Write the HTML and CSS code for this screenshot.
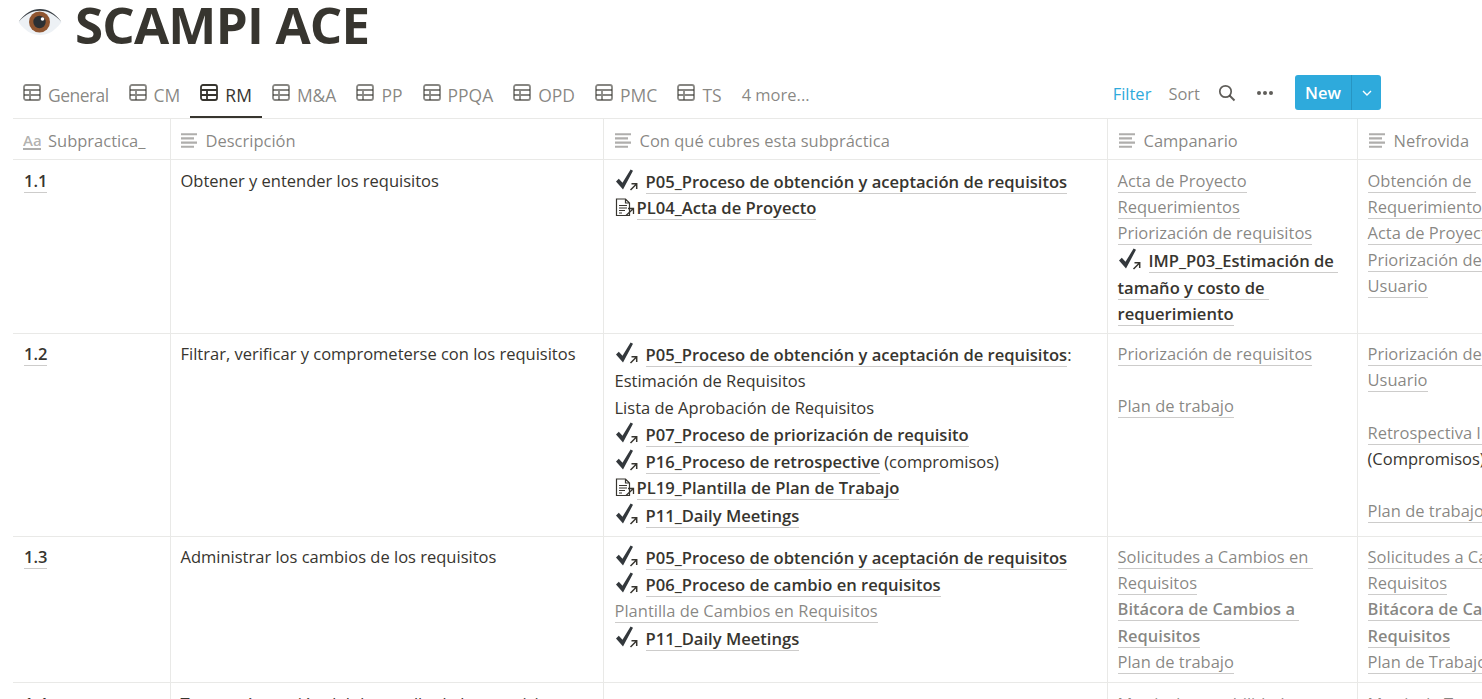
FILE: index.html
```html
<!DOCTYPE html>
<html lang="en">
<head>
    <meta charset="UTF-8">
    <title>SCAMPI ACE</title>
    <link rel="stylesheet" href="styles.css">
</head>
<body>
    <svg class="defs" width="0" height="0">
        <symbol id="grid" viewBox="0 0 18 17">
            <rect x="1" y="1" width="16" height="15" rx="2" fill="none" stroke="currentColor" stroke-width="1.8"/>
            <path d="M1 6h16M1 11h16M7 6v10" fill="none" stroke="currentColor" stroke-width="1.8"/>
        </symbol>
        <symbol id="lines" viewBox="0 0 16 15">
            <path d="M0 1.200h16M0 5.400h13M0 9.600h16M0 13.800h13" fill="none" stroke="currentColor" stroke-width="2.100"/>
        </symbol>
        <symbol id="check" viewBox="0 0 24 22">
            <path d="M1 12.500l2.800-2.800 3.700 4.100L15.600 0.500l2.400 1.300L8 20.500z" fill="#33383c"/>
            <path d="M15.500 21l6-6M16.500 14.800h5.200V20" fill="none" stroke="#37352f" stroke-width="1.500"/>
        </symbol>
        <symbol id="doc" viewBox="0 0 20 19">
            <path d="M1.500 1h9l4 4v12.500h-13zM10.500 1v4h4M4 7.500h8M4 10h8M4 12.500h6M4 15h3" fill="none" stroke="#37352f" stroke-width="1.200"/>
            <path d="M11 17.500l7-6.500M13 10.500h5.500V16" fill="none" stroke="#37352f" stroke-width="1.300"/>
        </symbol>
    </svg>

    <h1 class="title">
        <svg class="eye" viewBox="0 0 44 28">
            <path d="M0.500 14C7 5 14 1 22 1s15 4 21.500 13C37 23 30 27 22 27S7 23 0.500 14z" fill="#edf1f5"/>
            <path d="M0.500 14C7 5 14 1 22 1s15 4 21.500 13C36 5.500 29 2.700 22 2.700S8 5.500 0.500 14z" fill="#3a3f44"/>
            <circle cx="21.500" cy="14" r="10.500" fill="#8f5530"/>
            <circle cx="21.500" cy="14" r="6.200" fill="#2b2f33"/>
            <circle cx="24.500" cy="11" r="1.800" fill="#ffffff"/>
        </svg>
        SCAMPI ACE
    </h1>

    <div class="toolbar">
        <div class="tabs">
            <span class="tab first"><svg class="ico-grid"><use href="#grid"/></svg>General</span>
            <span class="tab"><svg class="ico-grid"><use href="#grid"/></svg>CM</span>
            <span class="tab active"><svg class="ico-grid"><use href="#grid"/></svg>RM</span>
            <span class="tab"><svg class="ico-grid"><use href="#grid"/></svg>M&amp;A</span>
            <span class="tab"><svg class="ico-grid"><use href="#grid"/></svg>PP</span>
            <span class="tab"><svg class="ico-grid"><use href="#grid"/></svg>PPQA</span>
            <span class="tab"><svg class="ico-grid"><use href="#grid"/></svg>OPD</span>
            <span class="tab"><svg class="ico-grid"><use href="#grid"/></svg>PMC</span>
            <span class="tab"><svg class="ico-grid"><use href="#grid"/></svg>TS</span>
            <span class="tab more">4 more...</span>
        </div>
        <div class="actions">
            <span class="filter">Filter</span>
            <span class="sort">Sort</span>
            <svg class="search" viewBox="0 0 18 18">
                <circle cx="7.500" cy="7.500" r="5.700" fill="none" stroke="currentColor" stroke-width="1.700"/>
                <path d="M11.500 11.500l5 5" fill="none" stroke="currentColor" stroke-width="1.900"/>
            </svg>
            <span class="dots"><i></i><i></i><i></i></span>
            <div class="new-btn">
                <span class="new-label">New</span>
                <span class="new-arrow"><svg viewBox="0 0 10 6"><path d="M1 1l4 4 4-4" fill="none" stroke="#fff" stroke-width="1.400"/></svg></span>
            </div>
        </div>
    </div>

    <table class="db">
        <colgroup>
            <col class="c1"><col class="c2"><col class="c3"><col class="c4"><col class="c5">
        </colgroup>
        <thead>
            <tr>
                <th><span class="aa">Aa</span>Subpractica_</th>
                <th><svg class="ico-lines"><use href="#lines"/></svg>Descripción</th>
                <th><svg class="ico-lines"><use href="#lines"/></svg>Con qué cubres esta subpráctica</th>
                <th><svg class="ico-lines"><use href="#lines"/></svg>Campanario</th>
                <th><svg class="ico-lines"><use href="#lines"/></svg>Nefrovida</th>
            </tr>
        </thead>
        <tbody>
            <tr class="row-1">
                <td class="num"><span class="u">1.1</span></td>
                <td>Obtener y entender los requisitos</td>
                <td class="links">
                    <div class="ln ic"><svg class="check"><use href="#check"/></svg><a class="pg">P05_Proceso de obtención y aceptación de requisitos</a></div>
                    <div class="ln id"><svg class="doc"><use href="#doc"/></svg><a class="pg">PL04_Acta de Proyecto</a></div>
                </td>
                <td class="gray">
                    <div class="ln"><a>Acta de Proyecto</a></div>
                    <div class="ln"><a>Requerimientos</a></div>
                    <div class="ln"><a>Priorización de requisitos</a></div>
                    <div class="ln ic"><svg class="check"><use href="#check"/></svg><a class="pg">IMP_P03_Estimación de&nbsp;</a></div>
                    <div class="ln ic"><a class="pg">tamaño y costo de&nbsp;</a></div>
                    <div class="ln"><a class="pg">requerimiento</a></div>
                </td>
                <td class="gray">
                    <div class="ln"><a>Obtención de&nbsp;</a></div>
                    <div class="ln"><a>Requerimientos</a></div>
                    <div class="ln"><a>Acta de Proyecto</a></div>
                    <div class="ln"><a>Priorización de requisitos</a></div>
                    <div class="ln"><a>Usuario</a></div>
                </td>
            </tr>
            <tr class="row-2">
                <td class="num"><span class="u">1.2</span></td>
                <td>Filtrar, verificar y comprometerse con los requisitos</td>
                <td class="links">
                    <div class="ln ic"><svg class="check"><use href="#check"/></svg><a class="pg">P05_Proceso de obtención y aceptación de requisitos</a>:</div>
                    <div class="ln">Estimación de Requisitos</div>
                    <div class="ln">Lista de Aprobación de Requisitos</div>
                    <div class="ln ic"><svg class="check"><use href="#check"/></svg><a class="pg">P07_Proceso de priorización de requisito</a></div>
                    <div class="ln ic"><svg class="check"><use href="#check"/></svg><a class="pg">P16_Proceso de retrospective</a> (compromisos)</div>
                    <div class="ln id"><svg class="doc"><use href="#doc"/></svg><a class="pg">PL19_Plantilla de Plan de Trabajo</a></div>
                    <div class="ln ic"><svg class="check"><use href="#check"/></svg><a class="pg">P11_Daily Meetings</a></div>
                </td>
                <td class="gray">
                    <div class="ln"><a>Priorización de requisitos</a></div>
                    <div class="ln"></div>
                    <div class="ln"><a>Plan de trabajo</a></div>
                </td>
                <td class="gray">
                    <div class="ln"><a>Priorización de requisitos</a></div>
                    <div class="ln"><a>Usuario</a></div>
                    <div class="ln"></div>
                    <div class="ln"><a>Retrospectiva Interna</a></div>
                    <div class="ln dark">(Compromisos)</div>
                    <div class="ln"></div>
                    <div class="ln"><a>Plan de trabajo</a></div>
                </td>
            </tr>
            <tr class="row-3">
                <td class="num"><span class="u">1.3</span></td>
                <td>Administrar los cambios de los requisitos</td>
                <td class="links">
                    <div class="ln ic"><svg class="check"><use href="#check"/></svg><a class="pg">P05_Proceso de obtención y aceptación de requisitos</a></div>
                    <div class="ln ic"><svg class="check"><use href="#check"/></svg><a class="pg">P06_Proceso de cambio en requisitos</a></div>
                    <div class="ln gray"><a>Plantilla de Cambios en Requisitos</a></div>
                    <div class="ln ic"><svg class="check"><use href="#check"/></svg><a class="pg">P11_Daily Meetings</a></div>
                </td>
                <td class="gray">
                    <div class="ln"><a>Solicitudes a Cambios en&nbsp;</a></div>
                    <div class="ln"><a>Requisitos</a></div>
                    <div class="ln"><a class="semi">Bitácora de Cambios a&nbsp;</a></div>
                    <div class="ln"><a class="semi">Requisitos</a></div>
                    <div class="ln"><a>Plan de trabajo</a></div>
                </td>
                <td class="gray">
                    <div class="ln"><a>Solicitudes a Cambios en</a></div>
                    <div class="ln"><a>Requisitos</a></div>
                    <div class="ln"><a class="semi">Bitácora de Cambios a</a></div>
                    <div class="ln"><a class="semi">Requisitos</a></div>
                    <div class="ln"><a>Plan de Trabajo</a></div>
                </td>
            </tr>
            <tr class="row-4">
                <td class="num"><span class="u">1.4</span></td>
                <td>Tener más gestión del desarrollo de los requisitos</td>
                <td class="links"></td>
                <td class="gray"><div class="ln"><a>Matriz de trazabilidad</a></div></td>
                <td class="gray"><div class="ln"><a>Matriz de Trazabilidad</a></div></td>
            </tr>
        </tbody>
    </table>
</body>
</html>
```

FILE: styles.css
```css
html, body {
    height: 699px;
    overflow: hidden;
}
body {
    margin: 0;
    background: #fff;
    color: #37352f;
    font-family: 'Open Sans', sans-serif;
    font-size: 16.5px;
}
.defs {
    display: block;
    height: 0;
}
.title {
    display: flex;
    align-items: flex-start;
    gap: 13px;
    height: 54px;
    margin: 0;
    padding-left: 18px;
    box-sizing: border-box;
    font-size: 51px;
    line-height: 48px;
    font-weight: 700;
    letter-spacing: -0.8px;
}
.eye {
    width: 44px;
    height: 28px;
    margin-top: 8px;
}
.toolbar {
    display: flex;
    justify-content: space-between;
    height: 65px;
    margin-left: 13px;
    border-bottom: 1px solid #e9e9e7;
    box-sizing: border-box;
    padding-top: 25px;
}
.tabs {
    display: flex;
}
.tab {
    display: flex;
    align-items: flex-start;
    gap: 7px;
    padding: 5px 10px 0;
    height: 39px;
    box-sizing: border-box;
    color: rgba(55, 53, 47, 0.6);
    font-size: 17.5px;
    line-height: 22px;
    white-space: nowrap;
}
.tab.first {
    letter-spacing: -0.55px;
}
.tab.active {
    color: #37352f;
    border-bottom: 2px solid #37352f;
}
.tab.more {
    font-size: 16.5px;
}
.ico-grid {
    width: 18px;
    height: 17px;
}
.actions {
    display: flex;
    align-items: flex-start;
    padding-right: 101px;
    color: rgba(55, 53, 47, 0.6);
}
.filter {
    color: #2eaadc;
    margin-top: 4px;
    line-height: 22px;
}
.sort {
    margin: 4px 0 0 17px;
    line-height: 22px;
}
.search {
    width: 18px;
    height: 18px;
    margin: 5px 0 0 18px;
    color: rgba(55, 53, 47, 0.8);
}
.dots {
    display: flex;
    gap: 2px;
    margin: 12px 0 0 21px;
}
.dots i {
    width: 4px;
    height: 4px;
    border-radius: 50%;
    background: rgba(55, 53, 47, 0.8);
}
.new-btn {
    display: flex;
    width: 86px;
    height: 35px;
    margin: -4px 0 0 22px;
    background: #2eaadc;
    border-radius: 3px;
    color: #fff;
    font-weight: 600;
    line-height: 35px;
}
.new-label {
    width: 56px;
    text-align: center;
    border-right: 1px solid #2795c2;
}
.new-arrow {
    display: flex;
    flex: 1;
    align-items: center;
    justify-content: center;
}
.new-arrow svg {
    width: 10px;
    height: 6px;
}
.db {
    width: 1594px;
    margin-left: 13px;
    table-layout: fixed;
    border-collapse: collapse;
}
.c1 { width: 157px; }
.c2 { width: 433px; }
.c3 { width: 504px; }
.c4 { width: 250px; }
.c5 { width: 250px; }
.db th {
    height: 37px;
    padding: 3px 10px 0;
    font-weight: 400;
    text-align: left;
    color: rgba(55, 53, 47, 0.6);
    white-space: nowrap;
    border-right: 1px solid #e9e9e7;
    border-bottom: 1px solid #e9e9e7;
}
.db th:nth-child(n+3) {
    padding-left: 11px;
}
.db th:last-child, .db td:last-child {
    border-right: 0;
}
.aa {
    display: inline-block;
    width: 18px;
    margin-right: 7px;
    font-size: 15px;
    line-height: 16px;
    font-weight: 600;
    border-bottom: 2px solid rgba(55, 53, 47, 0.4);
    color: rgba(55, 53, 47, 0.4);
    vertical-align: 1px;
}
.ico-lines {
    width: 16px;
    height: 15px;
    margin-right: 9px;
    color: rgba(55, 53, 47, 0.4);
    vertical-align: -1px;
}
.db td {
    padding: 8px 10px 0;
    vertical-align: top;
    line-height: 26px;
    border-right: 1px solid #e9e9e7;
    border-bottom: 1px solid #e9e9e7;
    overflow: hidden;
}
.db td.num, .db td.links {
    padding-left: 11px;
}
.row-1 td { height: 165px; }
.row-2 td, .row-3 td { padding-top: 7px; }
.row-2 td { height: 195px; }
.row-3 td { height: 138px; }
.num {
    font-weight: 600;
}
.u, .db a {
    text-decoration: none;
    border-bottom: 1px solid rgba(55, 53, 47, 0.25);
}
.ln {
    height: 26.2px;
    white-space: nowrap;
}
.links .ln {
    height: 26.5px;
}
.ln.ic {
    height: 27px;
    padding-top: 1px;
    box-sizing: border-box;
}
.ln.id {
    height: 27px;
}
.pg {
    font-weight: 600;
    font-size: 16.58px;
    color: #37352f;
}
.semi {
    font-weight: 600;
}
.gray {
    color: rgba(55, 53, 47, 0.6);
}
.dark {
    color: #37352f;
}
.check {
    width: 24px;
    height: 22px;
    margin: -4px 7px 0 0;
    vertical-align: -3px;
}
.doc {
    width: 20px;
    height: 19px;
    margin: -3px 2px 0 0;
    vertical-align: -3px;
}
```
